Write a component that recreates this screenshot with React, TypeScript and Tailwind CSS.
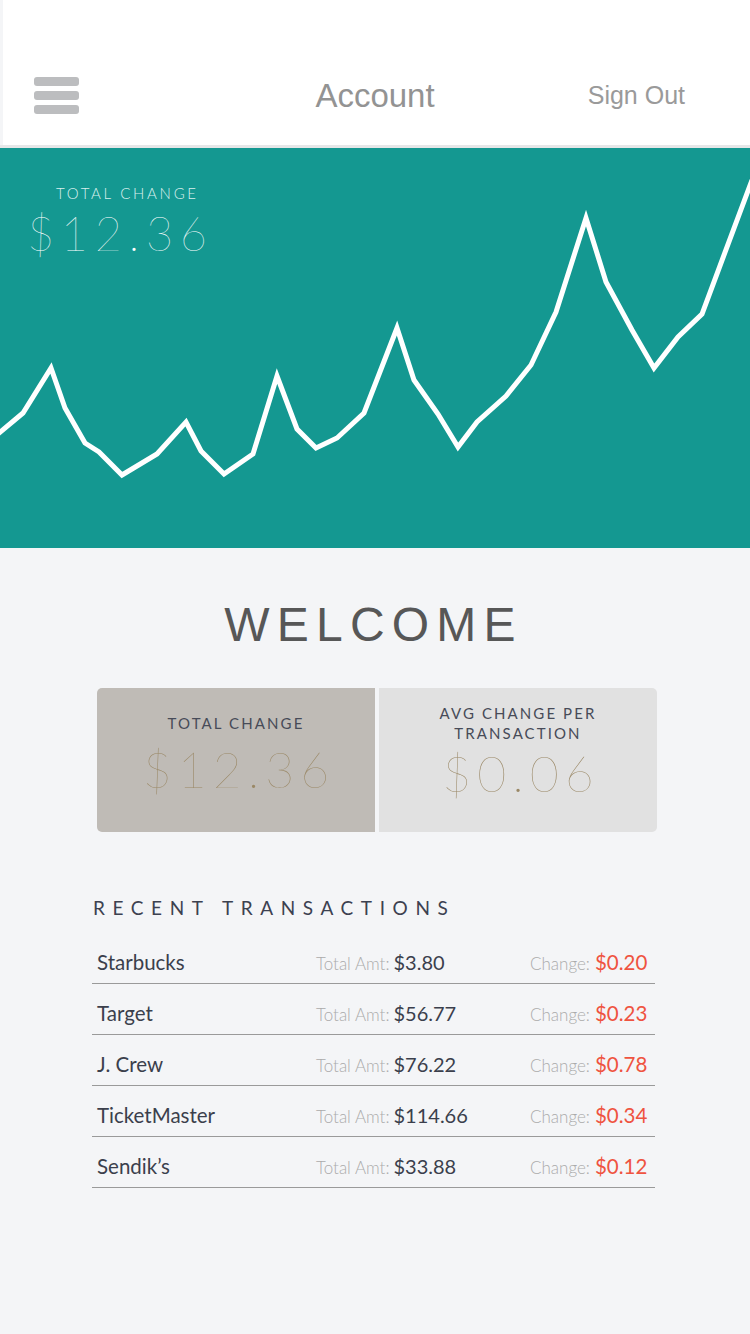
import React from "react";

const pts: [number, number][] = [
  [-2, 434], [23, 413], [51, 368], [65, 408], [85, 443], [99, 452], [122, 475], [157, 454],
  [186, 422], [201, 451], [224, 474], [253, 454], [277, 376], [297, 429], [316, 448],
  [337, 438], [364, 413], [397, 328], [414, 380], [438, 414], [458, 447], [477, 422],
  [506, 396], [531, 365], [556, 312], [586, 218], [606, 282], [632, 330], [654, 368],
  [678, 337], [702, 314], [752, 180],
];

const txs = [
  { name: "Starbucks", amt: "$3.80", ch: "$0.20" },
  { name: "Target", amt: "$56.77", ch: "$0.23" },
  { name: "J. Crew", amt: "$76.22", ch: "$0.78" },
  { name: "TicketMaster", amt: "$114.66", ch: "$0.34" },
  { name: "Sendik\u2019s", amt: "$33.88", ch: "$0.12" },
];

export default function App() {
  const d = pts.map((p, i) => `${i === 0 ? "M" : "L"}${p[0]} ${p[1] - 148}`).join(" ");
  return (
    <div className="w-[750px] min-h-[1334px] bg-[#f4f5f7] font-['Lato',sans-serif]">
      {/* Header */}
      <div className="ml-[3px] h-[145px] bg-white pt-[45px] grid grid-cols-[1fr_auto_1fr] items-center">
        <div className="h-[100px] flex items-center pl-[31px]">
          <div className="flex flex-col gap-[5px]">
            <div className="w-[45px] h-[9px] rounded-[3px] bg-[#bcbdbf]" />
            <div className="w-[45px] h-[9px] rounded-[3px] bg-[#bcbdbf]" />
            <div className="w-[45px] h-[9px] rounded-[3px] bg-[#bcbdbf]" />
          </div>
        </div>
        <div className="font-['Liberation_Sans',sans-serif] text-[33px] text-[#939393] leading-none -ml-[3px]">Account</div>
        <div className="flex justify-end pr-[65px] font-['Liberation_Sans',sans-serif] text-[25px] text-[#9a9a9a] leading-none">Sign Out</div>
      </div>
      <div className="h-[3px] bg-[#e6e7e8]" />

      {/* Chart */}
      <div className="relative h-[400px] bg-[#149891] overflow-hidden">
        <svg className="absolute inset-0" width="750" height="400" viewBox="0 0 750 400">
          <path d={d} fill="none" stroke="#ffffff" strokeWidth="5" strokeLinejoin="miter" strokeLinecap="butt" />
        </svg>
        <div className="relative pt-[38px]">
          <div className="pl-[56px] text-[15px] font-light tracking-[0.18em] text-[#d8efed] leading-none">TOTAL CHANGE</div>
          <div className="pl-[27px] mt-[9px] text-[47px] font-extralight tracking-[0.14em] text-white leading-none">$12.36</div>
        </div>
      </div>

      {/* Welcome */}
      <div className="pt-[53px] flex flex-col items-center">
        <div className="font-['Liberation_Sans',sans-serif] text-[48px] tracking-[0.15em] text-[#575757] leading-none pr-[3px]">WELCOME</div>
      </div>

      {/* Cards */}
      <div className="mt-[39px] ml-[97px] w-[560px] flex gap-[4px] h-[144px]">
        <div className="flex-1 bg-[#bfbbb6] rounded-l-[5px] flex flex-col items-center pt-[28px]">
          <div className="text-[15px] tracking-[0.14em] text-[#474b58] leading-none">TOTAL CHANGE</div>
          <div className="mt-[13px] text-[50px] font-extralight tracking-[0.12em] text-[#9a8866] leading-none pl-[6px]">$12.36</div>
        </div>
        <div className="flex-1 bg-[#e1e1e1] rounded-r-[5px] flex flex-col items-center pt-[15px]">
          <div className="text-[15px] tracking-[0.14em] text-[#474b58] leading-[20px] text-center">AVG CHANGE PER<br />TRANSACTION</div>
          <div className="mt-[5px] text-[50px] font-extralight tracking-[0.12em] text-[#9a8866] leading-none pl-[6px]">$0.06</div>
        </div>
      </div>

      {/* Recent transactions */}
      <div className="mt-[66px] ml-[92px] w-[563px]">
        <div className="pl-[1px] text-[19px] tracking-[0.4em] text-[#3c4150] leading-none">RECENT TRANSACTIONS</div>
        <div className="mt-[16px]">
          {txs.map((t) => (
            <div key={t.name} className="h-[51px] border-b border-[#9a9a9a] flex items-end pb-[11px] text-[#3b3f4c]">
              <div className="w-[224px] pl-[5px] text-[20.5px] leading-none">{t.name}</div>
              <div className="w-[214px] flex items-baseline leading-none">
                <span className="text-[17px] font-light text-[#ababab]">Total Amt:</span>
                <span className="ml-[4px] text-[20px]">{t.amt}</span>
              </div>
              <div className="flex items-baseline leading-none">
                <span className="text-[17px] font-light text-[#ababab]">Change:</span>
                <span className="ml-[5px] text-[20.5px] text-[#ef5340]">{t.ch}</span>
              </div>
            </div>
          ))}
        </div>
      </div>
    </div>
  );
}
